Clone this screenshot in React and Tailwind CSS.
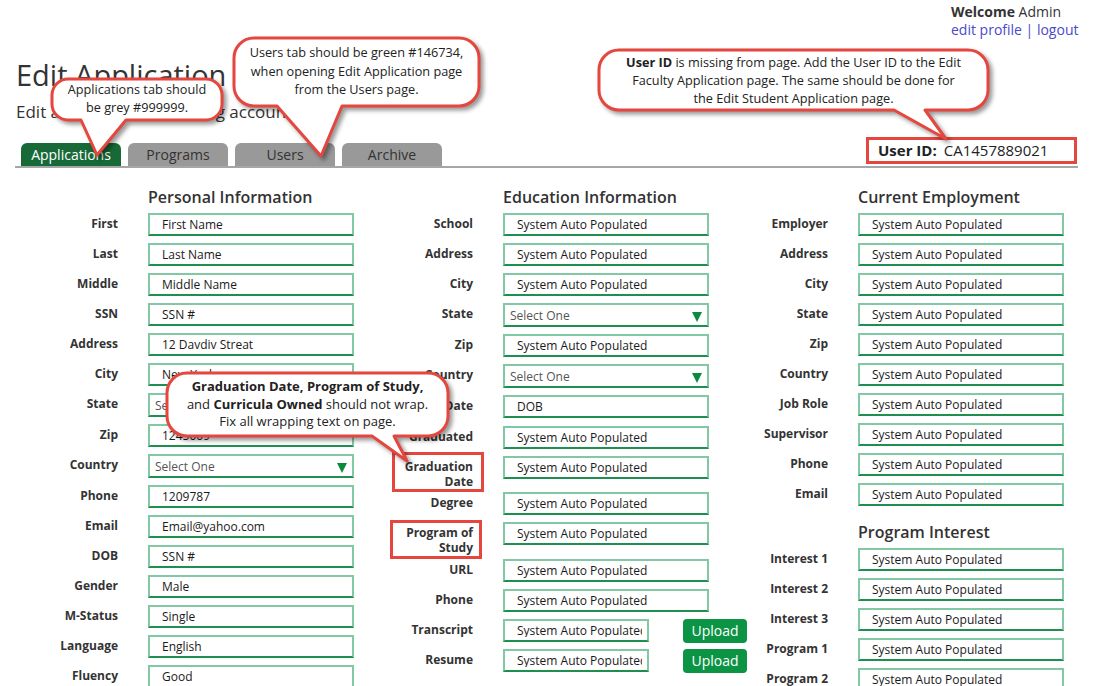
import React from 'react';

const RED = '#e5463e';

function Triangle() {
  return (
    <svg width="10" height="10" viewBox="0 0 10 10" className="mr-[5px] mt-[2px]">
      <polygon points="0,0 10,0 5,10" fill="#0b8a3e" />
    </svg>
  );
}

function Input({ value, narrow }) {
  if (narrow) {
    return (
      <div className="w-[146px] h-[23px] border-2 border-[#80c9a2] border-b-[#1f8f50] flex items-center pl-[12px] pt-[1px] text-[12px] text-[#1a1a1a] whitespace-nowrap leading-none">
        <span className="block w-[125px] overflow-hidden">{value}</span>
      </div>
    );
  }
  return (
    <div className="w-[206px] h-[23px] border-2 border-[#80c9a2] border-b-[#1f8f50] flex items-center pl-[12px] pr-[3px] pt-[1px] text-[12px] text-[#1a1a1a] overflow-hidden whitespace-nowrap leading-none">
      {value}
    </div>
  );
}

function Select() {
  return (
    <div className="w-[206px] h-[24px] border-2 border-[#80c9a2] border-b-[#1f8f50] flex items-center justify-between pl-[5px] pt-[1px] text-[12px] text-[#555] leading-none">
      <span>Select One</span>
      <Triangle />
    </div>
  );
}

function Upload() {
  return (
    <div className="ml-[34px] w-[64px] h-[24px] rounded-[4px] bg-[#0b9444] text-white text-[14px] flex items-center justify-center leading-none">
      Upload
    </div>
  );
}

function Row({ label, h, children, box }) {
  return (
    <div className={'flex ' + h}>
      <div className="relative w-[118px] shrink-0 pl-[38px] pt-[3px] text-right text-[12px] leading-[15px] font-bold text-[#333]">
        {label}
        {box}
      </div>
      <div className="ml-[30px] flex items-start">{children}</div>
    </div>
  );
}

function Heading({ children, extra }) {
  return (
    <div className={'ml-[148px] text-[16px] font-semibold leading-[24px] mb-[4px] text-[#333] whitespace-nowrap ' + (extra || '')}>
      {children}
    </div>
  );
}

function bubblePath(x, y, w, h, r, b1, b2, tx, ty) {
  return `M${x + r},${y} H${x + w - r} A${r},${r} 0 0 1 ${x + w},${y + r} V${y + h - r} A${r},${r} 0 0 1 ${x + w - r},${y + h} H${b2} L${tx},${ty} L${b1},${y + h} H${x + r} A${r},${r} 0 0 1 ${x},${y + h - r} V${y + r} A${r},${r} 0 0 1 ${x + r},${y} Z`;
}

const SAP = 'System Auto Populated';

export default function App() {
  const col1 = [
    ['First', 'First Name'],
    ['Last', 'Last Name'],
    ['Middle', 'Middle Name'],
    ['SSN', 'SSN #'],
    ['Address', '12 Davdiv Streat'],
    ['City', 'New York'],
    ['State', null],
    ['Zip', '1245009'],
    ['Country', null],
    ['Phone', '1209787'],
    ['Email', 'Email@yahoo.com'],
    ['DOB', 'SSN #'],
    ['Gender', 'Male'],
    ['M-Status', 'Single'],
    ['Language', 'English'],
    ['Fluency', 'Good'],
  ];
  const col3a = ['Employer', 'Address', 'City', 'State', 'Zip', 'Country', 'Job Role', 'Supervisor', 'Phone', 'Email'];
  const col3b = ['Interest 1', 'Interest 2', 'Interest 3', 'Program 1', 'Program 2'];

  return (
    <div className="relative w-full h-[686px] overflow-hidden bg-white font-['Open_Sans',sans-serif] text-[#333]">
      {/* top right welcome */}
      <div className="flex justify-end pr-[14px] pt-[3px]">
        <div className="w-[128px] text-[14px] leading-[18px] whitespace-nowrap">
          <div>
            <span className="font-bold">Welcome</span> Admin
          </div>
          <div className="text-[#4a4ac9]">edit profile | logout</div>
        </div>
      </div>

      <div className="pl-[16px] mt-[19px] text-[29px] leading-[34px] text-[#333]">Edit Application</div>
      <div className="pl-[16px] mt-[9px] text-[17px] leading-[22px] text-[#333]">Edit an applicant's existing account.</div>

      {/* tab row */}
      <div className="mx-[15px] mt-[14px] pl-[6px] pr-[1px] flex items-end justify-between">
        <div className="flex gap-[7px]">
          <div className="w-[100px] h-[23px] rounded-t-[6px] bg-[#176a37] text-white text-[14px] flex items-center justify-center">Applications</div>
          <div className="w-[100px] h-[23px] rounded-t-[6px] bg-[#999999] text-[#333] text-[14px] flex items-center justify-center">Programs</div>
          <div className="w-[100px] h-[23px] rounded-t-[6px] bg-[#999999] text-[#333] text-[14px] flex items-center justify-center">Users</div>
          <div className="w-[100px] h-[23px] rounded-t-[6px] bg-[#999999] text-[#333] text-[14px] flex items-center justify-center">Archive</div>
        </div>
        <div className="mb-[2px] w-[211px] h-[27px] border-[3px] border-[#e5463e] flex items-center pl-[9px] text-[15px] text-[#222] whitespace-nowrap">
          <span className="font-bold">User ID:</span>
          <span className="ml-[7px]">CA1457889021</span>
        </div>
      </div>
      <div className="mx-[15px] h-[2px] bg-[#a6a6a6]" />

      {/* columns */}
      <div className="flex pt-[17px]">
        <div className="w-[355px] shrink-0">
          <Heading>Personal Information</Heading>
          {col1.map(([l, v]) =>
            v === null ? (
              <Row key={l} label={l} h="h-[31px]">
                <Select />
              </Row>
            ) : (
              <Row key={l} label={l} h="h-[30px]">
                <Input value={v} />
              </Row>
            )
          )}
        </div>

        <div className="w-[355px] shrink-0">
          <Heading>Education Information</Heading>
          <Row label="School" h="h-[30px]"><Input value={SAP} /></Row>
          <Row label="Address" h="h-[30px]"><Input value={SAP} /></Row>
          <Row label="City" h="h-[30px]"><Input value={SAP} /></Row>
          <Row label="State" h="h-[31px]"><Select /></Row>
          <Row label="Zip" h="h-[30px]"><Input value={SAP} /></Row>
          <Row label="Country" h="h-[31px]"><Select /></Row>
          <Row label="Date" h="h-[31px]"><Input value="DOB" /></Row>
          <Row label="Graduated" h="h-[30px]"><Input value={SAP} /></Row>
          <Row
            label="Graduation Date"
            h="h-[36px]"
            box={<span className="absolute left-[37px] top-[-4px] w-[92px] h-[40px] border-[3px] border-[#e5463e]" />}
          >
            <Input value={SAP} />
          </Row>
          <Row label="Degree" h="h-[30px]"><Input value={SAP} /></Row>
          <Row
            label="Program of Study"
            h="h-[37px]"
            box={<span className="absolute left-[35px] top-[-2px] w-[92px] h-[39px] border-[3px] border-[#e5463e]" />}
          >
            <Input value={SAP} />
          </Row>
          <Row label="URL" h="h-[30px]"><Input value={SAP} /></Row>
          <Row label="Phone" h="h-[30px]"><Input value={SAP} /></Row>
          <Row label="Transcript" h="h-[30px]"><Input value={SAP} narrow /><Upload /></Row>
          <Row label="Resume" h="h-[30px]"><Input value={SAP} narrow /><Upload /></Row>
        </div>

        <div className="w-[355px] shrink-0">
          <Heading>Current Employment</Heading>
          {col3a.map((l) => (
            <Row key={l} label={l} h="h-[30px]"><Input value={SAP} /></Row>
          ))}
          <Heading extra="mt-[7px]">Program Interest</Heading>
          {col3b.map((l) => (
            <Row key={l} label={l} h="h-[30px]"><Input value={SAP} /></Row>
          ))}
        </div>
      </div>

      {/* callout bubbles */}
      <svg
        className="absolute left-0 top-0 pointer-events-none drop-shadow-[3px_3px_2px_rgba(0,0,0,0.4)]"
        width="1093"
        height="686"
      >
        <path d={bubblePath(52, 79, 170, 41, 16, 81, 126, 97, 155)} fill="white" stroke={RED} strokeWidth="3" strokeLinejoin="round" />
        <path d={bubblePath(234, 38, 245, 68, 20, 277, 342, 321, 156)} fill="white" stroke={RED} strokeWidth="3" strokeLinejoin="round" />
        <path d={bubblePath(599, 50, 389, 60, 20, 894, 925, 946, 139)} fill="white" stroke={RED} strokeWidth="3" strokeLinejoin="round" />
        <path d={bubblePath(167, 373, 281, 63, 20, 372, 394, 407, 461)} fill="white" stroke={RED} strokeWidth="3" strokeLinejoin="round" />
      </svg>

      <div className="absolute left-[52px] top-[80px] w-[170px] text-center text-[12.7px] leading-[18px] text-[#222]">
        Applications tab should
        <br />
        be grey #999999.
      </div>
      <div className="absolute left-[234px] top-[43px] w-[245px] text-center text-[12.7px] leading-[18.5px] text-[#222]">
        Users tab should be green #146734,
        <br />
        when opening Edit Application page
        <br />
        from the Users page.
      </div>
      <div className="absolute left-[599px] top-[53px] w-[389px] text-center text-[12.7px] leading-[18px] text-[#222]">
        <span className="font-bold">User ID</span> is missing from page. Add the User ID to the Edit
        <br />
        Faculty Application page. The same should be done for
        <br />
        the Edit Student Application page.
      </div>
      <div className="absolute left-[167px] top-[378px] w-[281px] text-center text-[13px] leading-[17.5px] text-[#222]">
        <span className="font-bold">Graduation Date, Program of Study,</span>
        <br />
        and <span className="font-bold">Curricula Owned</span> should not wrap.
        <br />
        Fix all wrapping text on page.
      </div>
    </div>
  );
}
